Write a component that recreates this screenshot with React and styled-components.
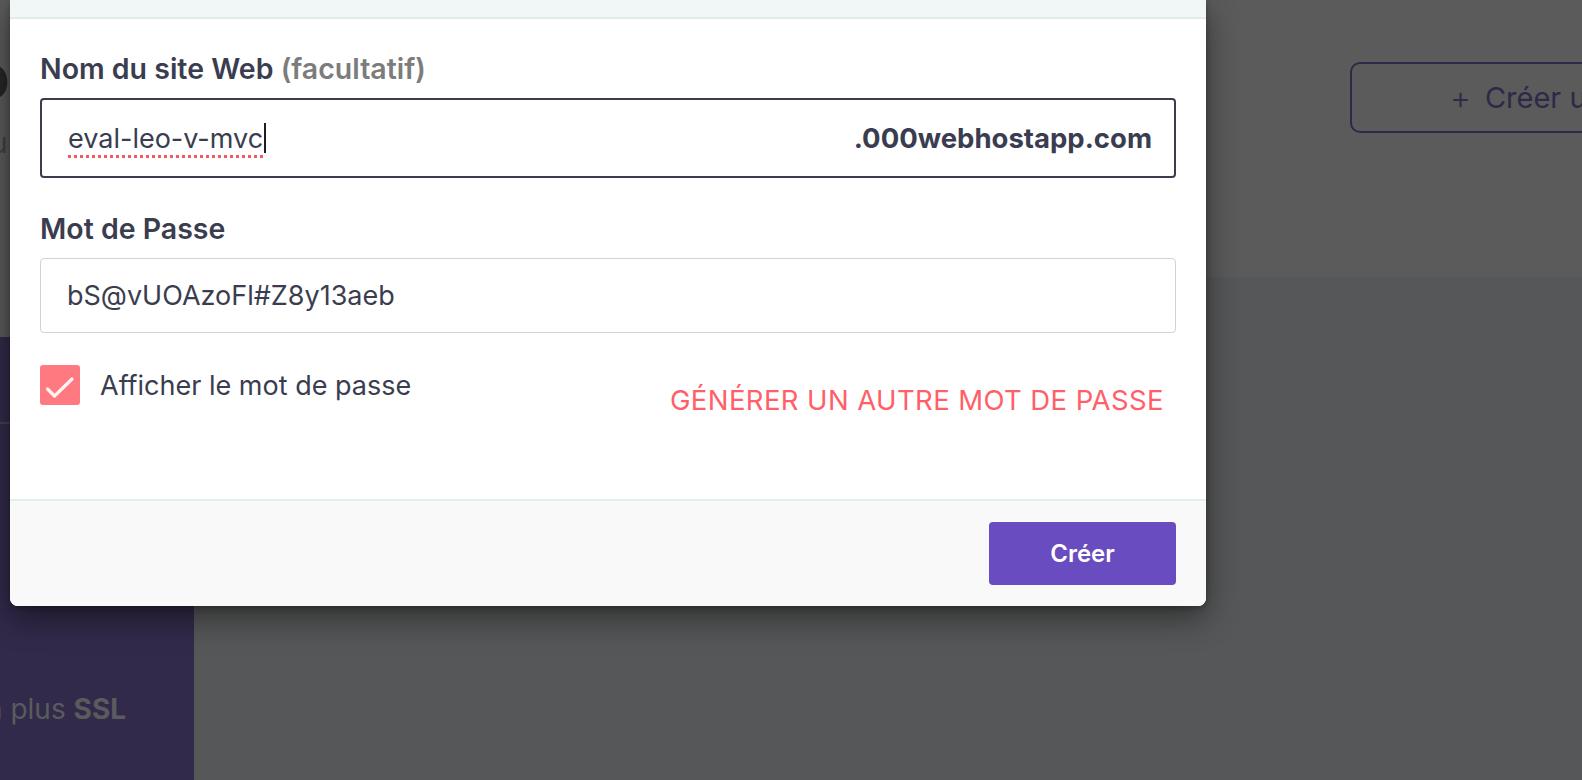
import React from 'react';
import styled, { createGlobalStyle } from 'styled-components';

const GlobalStyle = createGlobalStyle`
  *, *::before, *::after {
    box-sizing: border-box;
  }
  html, body {
    margin: 0;
    padding: 0;
    width: 100%;
    height: 100%;
    overflow: hidden;
    background: #565758;
    font-family: Inter, "Noto Sans", sans-serif;
  }
  #root {
    height: 100%;
  }
`;

const Page = styled.div`
  position: relative;
  display: grid;
  grid-template-columns: 194px 1fr;
  width: 100%;
  height: 780px;
  overflow: hidden;
`;

const Sidebar = styled.aside`
  display: flex;
  flex-direction: column;
  background: #5a5a5a;
`;

const SidebarTop = styled.div`
  height: 337px;
  flex-shrink: 0;
  display: flex;
  flex-direction: column;
  padding-top: 38px;
`;

const Logo = styled.div`
  margin-left: -30px;
  font-size: 64px;
  font-weight: 800;
  line-height: 76px;
  color: #262626;
`;

const LogoSub = styled.div`
  margin: 12px 0 0 -9px;
  font-size: 28px;
  line-height: 34px;
  color: #404040;
`;

const SidebarBody = styled.div`
  flex: 1;
  display: flex;
  flex-direction: column;
  background: #322a4a;
`;

const SidebarRule = styled.hr`
  margin: 85px 0 0;
  border: 0;
  border-top: 2px solid #44404f;
`;

const Promo = styled.p`
  margin: 268px 0 0 -14px;
  font-size: 28px;
  color: #5b5b5d;
  white-space: nowrap;

  b {
    font-weight: 700;
  }
`;

const Main = styled.main`
  display: flex;
  flex-direction: column;
  min-width: 0;
`;

const Header = styled.div`
  height: 277px;
  flex-shrink: 0;
  display: flex;
  align-items: flex-start;
  padding: 62px 0 0 1156px;
  background: #5b5b5b;
`;

const OutlineButton = styled.button`
  display: flex;
  align-items: center;
  gap: 14px;
  flex-shrink: 0;
  width: 420px;
  height: 71px;
  padding: 0 0 0 98px;
  border: 2px solid #2d2947;
  border-radius: 10px;
  background: transparent;
  font-family: inherit;
  font-size: 29px;
  color: #2d2947;
  white-space: nowrap;

  span {
    font-weight: 300;
    font-size: 32px;
  }
`;

const Content = styled.div`
  flex: 1;
  background: #565758;
`;

const Modal = styled.div`
  position: absolute;
  top: 0;
  left: 10px;
  width: 1196px;
  display: flex;
  flex-direction: column;
  background: #fff;
  border-radius: 0 0 8px 8px;
  box-shadow: 0 12px 32px rgba(0, 0, 0, 0.45), 0 2px 6px rgba(0, 0, 0, 0.25);
  overflow: hidden;
`;

const ModalHeader = styled.div`
  height: 19px;
  background: #f1f7f6;
  border-bottom: 2px solid #e2ecea;
`;

const ModalBody = styled.div`
  display: flex;
  flex-direction: column;
  padding: 34px 30px 84px;
`;

const Label = styled.label`
  margin-bottom: 13px;
  font-size: 28.5px;
  line-height: 32px;
  font-weight: 600;
  color: #3a3d4f;

  small {
    font-size: inherit;
    color: #7c7c7c;
  }
`;

const Field = styled.div`
  display: flex;
  align-items: center;
  justify-content: space-between;
  height: ${p => (p.$active ? 80 : 75)}px;
  padding: 0 22px 0 26px;
  margin-bottom: ${p => p.$gap || 0}px;
  border: ${p => (p.$active ? '2px solid #3a3d4f' : '1.5px solid #c9d4dd')};
  border-radius: 4px;
  font-size: 27px;
  color: #3a3d4f;
`;

const Value = styled.span`
  display: flex;
  align-items: center;
`;

const Misspelled = styled.span`
  text-decoration: underline dotted #f2585c;
  text-decoration-thickness: 3px;
  text-underline-offset: 7px;
`;

const Caret = styled.span`
  width: 1.5px;
  height: 30px;
  margin-left: 1px;
  background: #1e1e1e;
`;

const Suffix = styled.span`
  font-size: 27.5px;
  font-weight: 700;
`;

const OptionsRow = styled.div`
  display: flex;
  justify-content: space-between;
  align-items: flex-start;
  padding-right: 12px;
`;

const CheckLabel = styled.div`
  display: flex;
  align-items: center;
  gap: 20px;
  font-size: 27px;
  color: #3a3d4f;
`;

const CheckBox = styled.span`
  display: flex;
  width: 40px;
  height: 40px;
  border-radius: 3px;
  background: #ff7a80;
`;

const LinkButton = styled.button`
  margin-top: 20px;
  padding: 0;
  border: 0;
  background: none;
  font-family: inherit;
  font-size: 27.5px;
  line-height: 30px;
  letter-spacing: 0.4px;
  color: #ff5f69;
`;

const Footer = styled.div`
  display: flex;
  justify-content: flex-end;
  padding: 21px 30px;
  background: #f9f9f9;
  border-top: 2px solid #e4eeeb;
`;

const PrimaryButton = styled.button`
  width: 187px;
  height: 63px;
  border: 0;
  border-radius: 4px;
  background: #694dc0;
  font-family: inherit;
  font-size: 24px;
  font-weight: 600;
  color: #fff;
`;

const App = () => {
  return (
    <>
      <GlobalStyle />
      <Page>
        <Sidebar>
          <SidebarTop>
            <Logo>o</Logo>
            <LogoSub>u</LogoSub>
          </SidebarTop>
          <SidebarBody>
            <SidebarRule />
            <Promo>
              n plus <b>SSL</b>
            </Promo>
          </SidebarBody>
        </Sidebar>
        <Main>
          <Header>
            <OutlineButton>
              <span>+</span> Créer un site
            </OutlineButton>
          </Header>
          <Content />
        </Main>

        <Modal>
          <ModalHeader />
          <ModalBody>
            <Label>
              Nom du site Web <small>(facultatif)</small>
            </Label>
            <Field $active $gap={35}>
              <Value>
                <Misspelled>eval-leo-v-mvc</Misspelled>
                <Caret />
              </Value>
              <Suffix>.000webhostapp.com</Suffix>
            </Field>

            <Label>Mot de Passe</Label>
            <Field $gap={32}>
              <Value>bS@vUOAzoFl#Z8y13aeb</Value>
            </Field>

            <OptionsRow>
              <CheckLabel>
                <CheckBox>
                  <svg width="40" height="40" viewBox="0 0 40 40">
                    <polyline
                      points="7.5,24 14.5,31 32,14"
                      fill="none"
                      stroke="#fff3f3"
                      strokeWidth="3.2"
                      strokeLinecap="round"
                      strokeLinejoin="round"
                    />
                  </svg>
                </CheckBox>
                Afficher le mot de passe
              </CheckLabel>
              <LinkButton>GÉNÉRER UN AUTRE MOT DE PASSE</LinkButton>
            </OptionsRow>
          </ModalBody>
          <Footer>
            <PrimaryButton>Créer</PrimaryButton>
          </Footer>
        </Modal>
      </Page>
    </>
  );
};

export default App;
